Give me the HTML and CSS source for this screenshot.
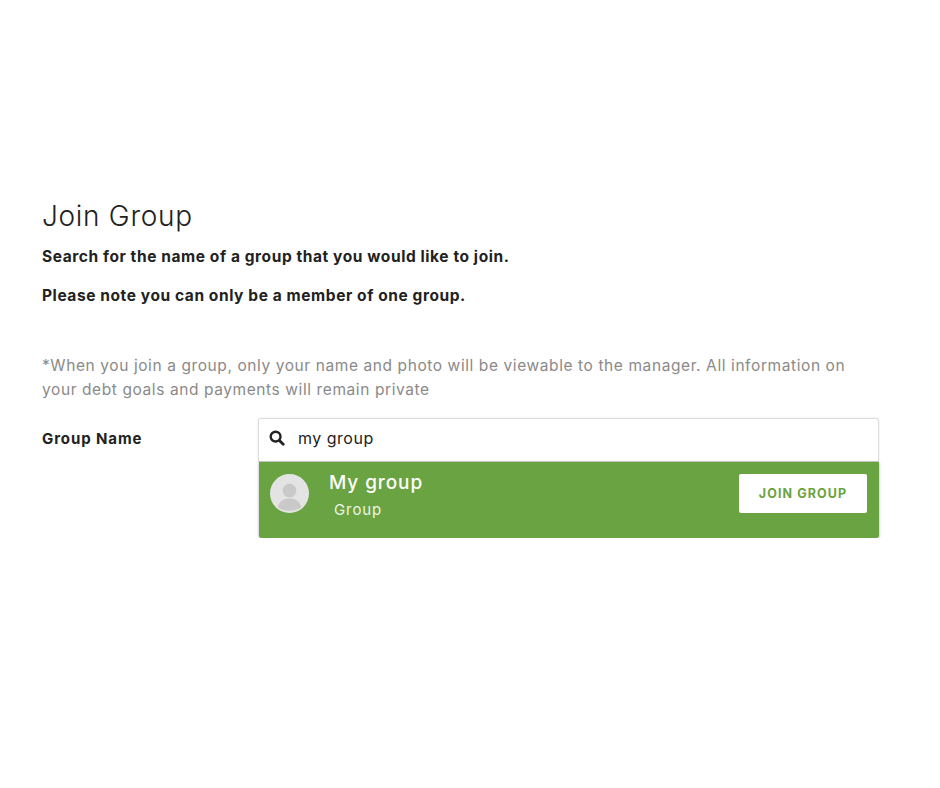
FILE: index.html
```html
<!DOCTYPE html>
<html lang="en">
<head>
    <meta charset="UTF-8">
    <title>Join Group</title>
    <link rel="stylesheet" href="styles.css">
</head>
<body>
    <div class="container">
        <h1>Join Group</h1>
        <p class="lead">Search for the name of a group that you would like to join.</p>
        <p class="lead">Please note you can only be a member of one group.</p>
        <p class="note">*When you join a group, only your name and photo will be viewable to the manager. All information on your debt goals and payments will remain private</p>
        <div class="field">
            <label class="field-label">Group Name</label>
            <div class="search">
                <div class="search-box">
                    <svg class="search-icon" width="16" height="16" viewBox="0 0 16 16"><circle cx="6.6" cy="6.6" r="4.9" fill="none" stroke="#222" stroke-width="2.4"/><path d="M10.4 10.4L14.2 14.2" stroke="#222" stroke-width="2.8" stroke-linecap="round"/></svg>
                    <span class="search-text">my group</span>
                </div>
                <div class="result">
                    <svg class="avatar" width="39" height="39" viewBox="0 0 40 40"><circle cx="20" cy="20" r="20" fill="#e3e3e3"/><circle cx="20" cy="17" r="7" fill="#c9c9c9"/><path d="M8 34c1-6 6-9 12-9s11 3 12 9a20 20 0 0 1-24 0z" fill="#c9c9c9"/></svg>
                    <div class="result-info">
                        <div class="result-name">My group</div>
                        <div class="result-type">Group</div>
                    </div>
                    <button class="join-button">JOIN GROUP</button>
                </div>
            </div>
        </div>
    </div>
</body>
</html>
```
FILE: styles.css
```css
body {
    margin: 0;
    font-family: Inter, Arial, sans-serif;
    background-color: #fff;
}
.container {
    padding: 198px 60px 0 42px;
}
h1 {
    margin: 0 0 12px;
    font-size: 28px;
    line-height: 36px;
    font-weight: 300;
    letter-spacing: 0.7px;
    color: #222;
}
.lead {
    margin: 0 0 18px;
    font-size: 15.5px;
    line-height: 21px;
    font-weight: 700;
    letter-spacing: 0.58px;
    color: #222;
}
.note {
    margin: 48px 0 16px;
    font-size: 15.5px;
    line-height: 24px;
    font-weight: 400;
    letter-spacing: 0.59px;
    color: #8a8a8a;
}
.field {
    display: flex;
}
.field-label {
    width: 216px;
    padding-top: 11px;
    font-size: 15px;
    font-weight: 700;
    letter-spacing: 0.9px;
    color: #222;
}
.search {
    width: 621px;
}
.search-box {
    display: flex;
    align-items: center;
    height: 38px;
    border: 1px solid #ddd;
    border-bottom-color: #ccc;
    border-radius: 3px 3px 0 0;
    padding: 0 0 4px 10px;
    box-shadow: 0 0 2px rgba(0, 0, 0, 0.12);
}
.search-icon {
    margin-right: 13px;
}
.search-text {
    font-size: 16px;
    letter-spacing: 0.5px;
    color: #222;
}
.result {
    display: flex;
    align-items: flex-start;
    height: 64px;
    margin-left: 1px;
    padding: 12px 12px 0 11px;
    background-color: #6aa341;
    border-radius: 0 0 3px 3px;
    box-shadow: 0 1px 3px rgba(0, 0, 0, 0.35);
}
.result-info {
    margin: -4px 0 0 20px;
    flex: 1;
    color: #fff;
}
.result-name {
    font-size: 19px;
    font-weight: 500;
    letter-spacing: 0.9px;
    line-height: 26px;
}
.result-type {
    margin: 4px 0 0 5px;
    font-size: 15px;
    letter-spacing: 0.9px;
    line-height: 20px;
    color: #eef4e8;
}
.join-button {
    width: 128px;
    height: 39px;
    border: none;
    border-radius: 2px;
    background: #fff;
    color: #6aa341;
    font-family: Inter, Arial, sans-serif;
    font-size: 12.5px;
    font-weight: 700;
    letter-spacing: 1.1px;
    cursor: pointer;
}
```
